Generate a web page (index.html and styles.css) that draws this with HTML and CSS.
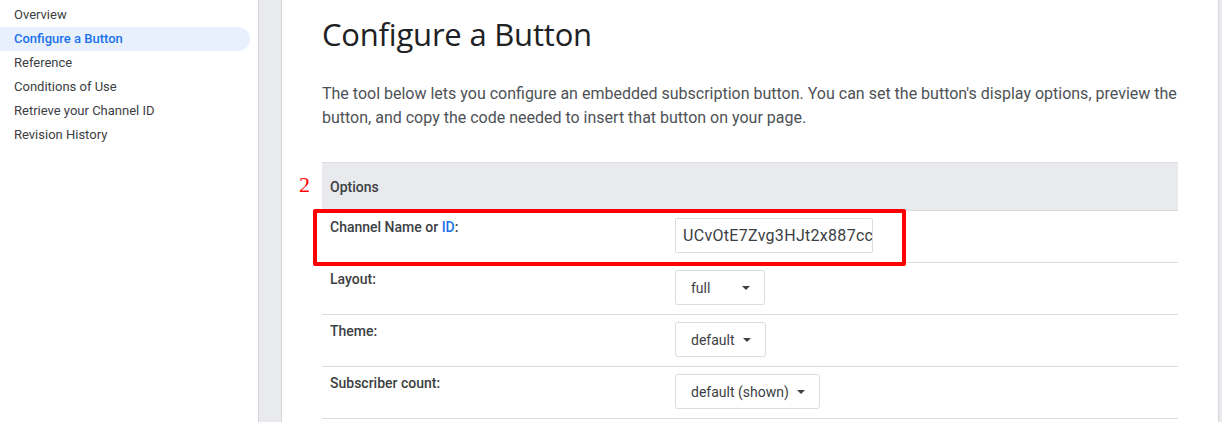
FILE: index.html
```html
<!DOCTYPE html>
<html>
<head>
<meta charset="utf-8">
<link rel="stylesheet" href="styles.css">
</head>
<body>
<div class="page">
  <nav class="nav">
    <a class="nav-item">Overview</a>
    <a class="nav-item active">Configure a Button</a>
    <a class="nav-item">Reference</a>
    <a class="nav-item">Conditions of Use</a>
    <a class="nav-item">Retrieve your Channel ID</a>
    <a class="nav-item">Revision History</a>
  </nav>
  <div class="gutter"></div>
  <main class="main">
    <h1 class="title">Configure a Button</h1>
    <p class="intro">The tool below lets you configure an embedded subscription button. You can set the button's display options, preview the button, and copy the code needed to insert that button on your page.</p>
    <div class="table">
      <div class="row head">
        <span class="marker">2</span>
        <div class="label">Options</div>
      </div>
      <div class="row">
        <div class="highlight"></div>
        <div class="label">Channel Name or <a class="link">ID</a>:</div>
        <div class="field"><div class="input">UCvOtE7Zvg3HJt2x887cc</div></div>
      </div>
      <div class="row">
        <div class="label">Layout:</div>
        <div class="field"><div class="select w-full"><span>full</span><span class="caret"></span></div></div>
      </div>
      <div class="row">
        <div class="label">Theme:</div>
        <div class="field"><div class="select"><span>default</span><span class="caret"></span></div></div>
      </div>
      <div class="row">
        <div class="label">Subscriber count:</div>
        <div class="field"><div class="select"><span>default (shown)</span><span class="caret"></span></div></div>
      </div>
    </div>
  </main>
  <div class="edge"></div>
</div>
</body>
</html>
```
FILE: styles.css
```css
* { box-sizing: border-box; }
html, body { margin: 0; padding: 0; background: #fff; }
body {
  font-family: Roboto, "Liberation Sans", sans-serif;
  color: #202124;
  width: 1222px;
  height: 422px;
  overflow: hidden;
}
.page {
  display: flex;
  height: 422px;
}
.nav {
  width: 258px;
  flex: none;
  display: flex;
  flex-direction: column;
  padding-top: 3px;
  padding-right: 8px;
}
.nav-item {
  display: block;
  font-size: 13px;
  line-height: 24px;
  height: 24px;
  padding-left: 14px;
  color: #3c4043;
}
.nav-item.active {
  background: #e8f0fe;
  color: #1a73e8;
  font-weight: 500;
  border-radius: 0 12px 12px 0;
}
.gutter {
  width: 24px;
  flex: none;
  background: #e8eaed;
  border-left: 1px solid #d4d6d9;
  border-right: 1px solid #d4d6d9;
}
.main {
  flex: 1;
  padding: 0 40px;
}
.edge {
  width: 4px;
  flex: none;
  background: #e8eaed;
  border-left: 1px solid #d4d6d9;
}
.title {
  font-family: "Open Sans", Roboto, sans-serif;
  font-weight: 400;
  font-size: 31px;
  line-height: 40px;
  margin: 14px 0 0;
  color: #202124;
  letter-spacing: -0.2px;
}
.intro {
  font-size: 16px;
  line-height: 24px;
  color: #4e5256;
  margin: 28px 0 0;
}
.table {
  margin-top: 32px;
  border-top: 1px solid #dadce0;
}
.row {
  position: relative;
  display: flex;
  height: 52px;
  border-bottom: 1px solid #dadce0;
  font-size: 14px;
}
.row.head {
  height: 48px;
  background: #e8eaed;
  align-items: center;
}
.label {
  width: 353px;
  flex: none;
  padding: 8px 0 0 8px;
  font-weight: 500;
  color: #3c4043;
  line-height: 16px;
}
.head .label { padding-top: 0; }
.link { color: #1a73e8; }
.field {
  padding-top: 7px;
}
.input {
  width: 198px;
  height: 35px;
  border: 1px solid #dadce0;
  border-radius: 2px;
  font-size: 16px;
  line-height: 33px;
  padding-left: 7px;
  color: #3c4043;
  letter-spacing: 0.3px;
  white-space: nowrap;
  overflow: hidden;
}
.select {
  display: inline-flex;
  align-items: center;
  height: 35px;
  border: 1px solid #dadce0;
  border-radius: 3px;
  padding: 0 14px 0 15px;
  font-size: 14px;
  color: #3c4043;
  gap: 8px;
}
.select.w-full { width: 90px; justify-content: space-between; }
.caret {
  width: 0;
  height: 0;
  border-left: 4px solid transparent;
  border-right: 4px solid transparent;
  border-top: 4px solid #3c4043;
  margin-top: 1px;
}
.marker {
  position: absolute;
  left: -23px;
  top: 9px;
  font-family: "Liberation Serif", serif;
  font-size: 22px;
  color: #f00;
}
.highlight {
  position: absolute;
  left: -9px;
  top: -2px;
  width: 593px;
  height: 57px;
  border: 4px solid #f00;
  border-radius: 2px;
}
```
